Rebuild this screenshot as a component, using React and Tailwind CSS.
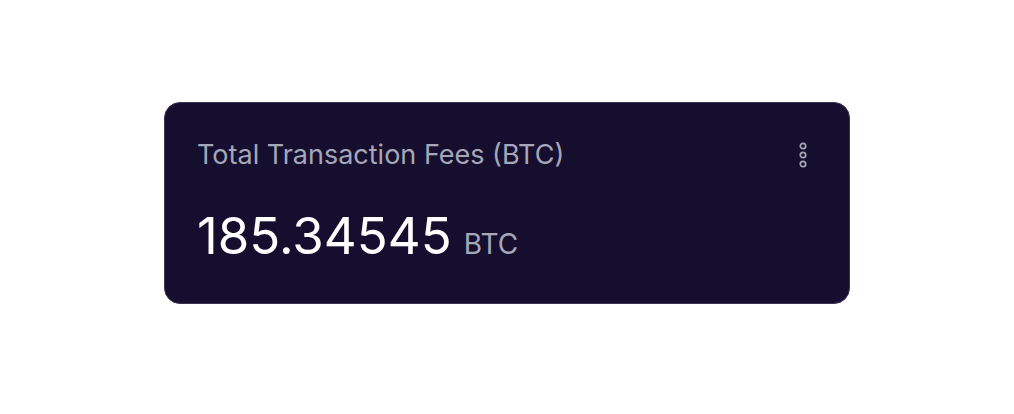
import React from 'react';

function DotsIcon() {
  return (
    <svg width="12" height="28" viewBox="0 0 12 28" fill="none" stroke="currentColor" strokeWidth="1.7">
      <circle cx="6" cy="5" r="2.7" />
      <circle cx="6" cy="14" r="2.7" />
      <circle cx="6" cy="23" r="2.7" />
    </svg>
  );
}

export default function App() {
  return (
    <div className="w-[1014px] h-[414px] bg-white flex justify-center pt-[102px]" style={{ fontFamily: 'Inter, "Noto Sans", sans-serif' }}>
      <div className="w-[686px] h-[202px] rounded-2xl bg-[#160e2e] border border-[#3a3350] pl-8 pr-10 pt-9">
        <div className="flex items-center justify-between">
          <h3 className="text-[27px] text-[#a5a7b9] leading-8">Total Transaction Fees (BTC)</h3>
          <button className="text-[#a5a7b9]">
            <DotsIcon />
          </button>
        </div>
        <div className="flex items-baseline gap-3 mt-[39px]">
          <span className="text-[51px] text-white leading-none">185.34545</span>
          <span className="text-[28px] text-[#a5a7b9] leading-none">BTC</span>
        </div>
      </div>
    </div>
  );
}
